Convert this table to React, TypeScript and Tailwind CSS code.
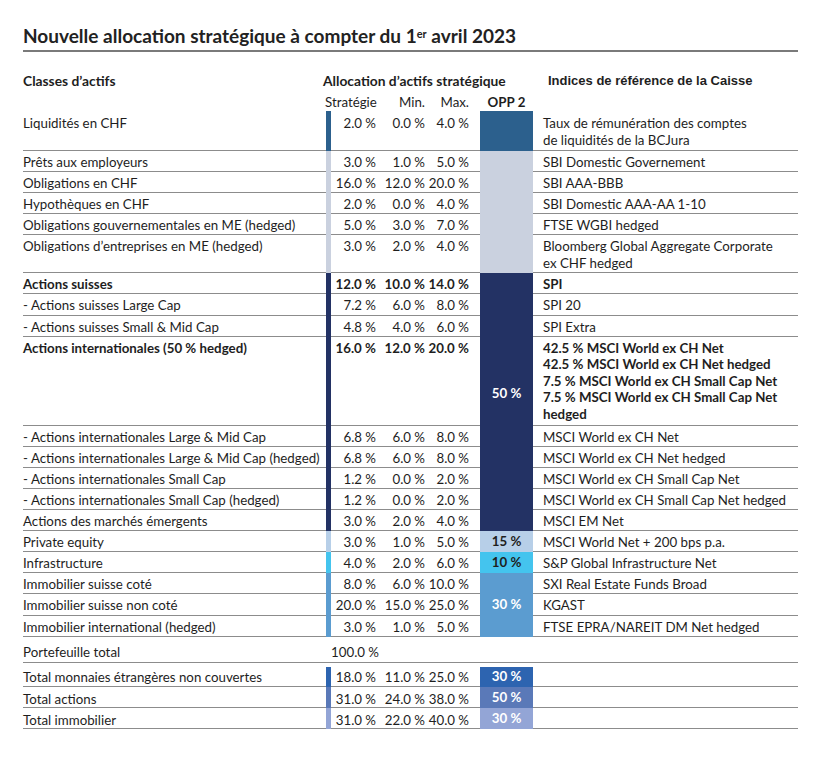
const line = "border-b border-[#8c8c8c]";

interface Row {
  label: string;
  s?: string;
  mn?: string;
  mx?: string;
  idx?: string[];
  bold?: boolean;
  pt: string;
  full?: boolean;
}

// narrow no-break space between number and %
const p = (n: string) => n + "\u202F%";

const rows: Row[] = [
  { label: "Liquidités en CHF", s: p("2.0"), mn: p("0.0"), mx: p("4.0"), idx: ["Taux de rémunération des comptes", "de liquidités de la BCJura"], pt: "pt-[4px]" },
  { label: "Prêts aux employeurs", s: p("3.0"), mn: p("1.0"), mx: p("5.0"), idx: ["SBI Domestic Governement"], pt: "pt-[3px]" },
  { label: "Obligations en CHF", s: p("16.0"), mn: p("12.0"), mx: p("20.0"), idx: ["SBI AAA-BBB"], pt: "pt-[3px]" },
  { label: "Hypothèques en CHF", s: p("2.0"), mn: p("0.0"), mx: p("4.0"), idx: ["SBI Domestic AAA-AA 1-10"], pt: "pt-[3px]" },
  { label: "Obligations gouvernementales en ME (hedged)", s: p("5.0"), mn: p("3.0"), mx: p("7.0"), idx: ["FTSE WGBI hedged"], pt: "pt-[3px]" },
  { label: "Obligations d’entreprises en ME (hedged)", s: p("3.0"), mn: p("2.0"), mx: p("4.0"), idx: ["Bloomberg Global Aggregate Corporate", "ex CHF hedged"], pt: "pt-[3px]" },
  { label: "Actions suisses", s: p("12.0"), mn: p("10.0"), mx: p("14.0"), idx: ["SPI"], bold: true, pt: "pt-[3px]" },
  { label: "- Actions suisses Large Cap", s: p("7.2"), mn: p("6.0"), mx: p("8.0"), idx: ["SPI 20"], pt: "pt-[3px]" },
  { label: "- Actions suisses Small & Mid Cap", s: p("4.8"), mn: p("4.0"), mx: p("6.0"), idx: ["SPI Extra"], pt: "pt-[3px]" },
  {
    label: "Actions internationales (50 % hedged)",
    s: p("16.0"),
    mn: p("12.0"),
    mx: p("20.0"),
    idx: [
      "42.5 % MSCI World ex CH Net",
      "42.5 % MSCI World ex CH Net hedged",
      "7.5 % MSCI World ex CH Small Cap Net",
      "7.5 % MSCI World ex CH Small Cap Net",
      "hedged",
    ],
    bold: true,
    pt: "pt-[3px]",
  },
  { label: "- Actions internationales Large & Mid Cap", s: p("6.8"), mn: p("6.0"), mx: p("8.0"), idx: ["MSCI World ex CH Net"], pt: "pt-[3px]" },
  { label: "- Actions internationales Large & Mid Cap (hedged)", s: p("6.8"), mn: p("6.0"), mx: p("8.0"), idx: ["MSCI World ex CH Net hedged"], pt: "pt-[3px]" },
  { label: "- Actions internationales Small Cap", s: p("1.2"), mn: p("0.0"), mx: p("2.0"), idx: ["MSCI World ex CH Small Cap Net"], pt: "pt-[3px]" },
  { label: "- Actions internationales Small Cap (hedged)", s: p("1.2"), mn: p("0.0"), mx: p("2.0"), idx: ["MSCI World ex CH Small Cap Net hedged"], pt: "pt-[3px]" },
  { label: "Actions des marchés émergents", s: p("3.0"), mn: p("2.0"), mx: p("4.0"), idx: ["MSCI EM Net"], pt: "pt-[3px]" },
  { label: "Private equity", s: p("3.0"), mn: p("1.0"), mx: p("5.0"), idx: ["MSCI World Net + 200 bps p.a."], pt: "pt-[3px]" },
  { label: "Infrastructure", s: p("4.0"), mn: p("2.0"), mx: p("6.0"), idx: ["S&P Global Infrastructure Net"], pt: "pt-[3px]" },
  { label: "Immobilier suisse coté", s: p("8.0"), mn: p("6.0"), mx: p("10.0"), idx: ["SXI Real Estate Funds Broad"], pt: "pt-[3px]" },
  { label: "Immobilier suisse non coté", s: p("20.0"), mn: p("15.0"), mx: p("25.0"), idx: ["KGAST"], pt: "pt-[3px]" },
  { label: "Immobilier international (hedged)", s: p("3.0"), mn: p("1.0"), mx: p("5.0"), idx: ["FTSE EPRA/NAREIT DM Net hedged"], pt: "pt-[3px]" },
  { label: "Portefeuille total", s: p("100.0"), pt: "pt-[7px]", full: true },
  { label: "Total monnaies étrangères non couvertes", s: p("18.0"), mn: p("11.0"), mx: p("25.0"), pt: "pt-[6px]" },
  { label: "Total actions", s: p("31.0"), mn: p("24.0"), mx: p("38.0"), pt: "pt-[4px]" },
  { label: "Total immobilier", s: p("31.0"), mn: p("22.0"), mx: p("40.0"), pt: "pt-[4px]" },
];

const blocks = [
  { key: "liq", row: "row-[1/span_1]", color: "bg-[#2c608d]" },
  { key: "obl", row: "row-[2/span_5]", color: "bg-[#cad1df]" },
  { key: "act", row: "row-[7/span_9]", color: "bg-[#233264]", text: p("50"), tc: "text-white", tpos: "pt-[112px]" },
  { key: "pe", row: "row-[16/span_1]", color: "bg-[#b7cfe8]", text: p("15"), tc: "text-[#1e1e1e]" },
  { key: "inf", row: "row-[17/span_1]", color: "bg-[#44c4ee]", text: p("10"), tc: "text-[#1e1e1e]" },
  { key: "imm", row: "row-[18/span_3]", color: "bg-[#5b9cd0]", text: p("30"), tc: "text-white" },
  { key: "tm", row: "row-[22/span_1]", color: "bg-[#2d64b0]", text: p("30"), tc: "text-white", gap: true },
  { key: "ta", row: "row-[23/span_1]", color: "bg-[#5a79b8]", text: p("50"), tc: "text-white" },
  { key: "ti", row: "row-[24/span_1]", color: "bg-[#93a5d6]", text: p("30"), tc: "text-white" },
];

export default function App() {
  return (
    <div className="min-h-[761px] w-[836px] bg-white pl-[23px] pt-[25px] font-['Lato',sans-serif] text-[13.3px] text-[#1e1e1e]">
      <div className="w-[775px] border-b-2 border-[#7a7a7a] pb-[3px]">
        <h1 className="text-[19px] font-bold leading-[22px] text-[#222]">
          Nouvelle allocation stratégique à compter du 1<sup className="text-[11px]">er</sup> avril 2023
        </h1>
      </div>

      <div className="mt-[20px] flex w-[775px] items-end leading-[17px]">
        <div className="w-[300px] text-[13.8px] font-bold">Classes d’actifs</div>
        <div className="w-[225px] text-[13.8px] font-bold">Allocation d’actifs stratégique</div>
        <div className="font-['Liberation_Sans',sans-serif] text-[13px] font-bold">Indices de référence de la Caisse</div>
      </div>

      <div className="mt-[5px] grid w-[775px] grid-cols-[303px_5px_45px_49px_44px_11px_53px_10px_255px] leading-[17px]">
        <div className="col-span-2" />
        <div className="-ml-[6px] text-right">Stratégie</div>
        <div className="text-right">Min.</div>
        <div className="text-right">Max.</div>
        <div />
        <div className="text-center font-bold">OPP 2</div>
      </div>

      <div className="grid w-[775px] grid-cols-[303px_5px_45px_49px_44px_11px_53px_10px_255px] grid-rows-[40px_21.1px_21.1px_21.1px_21.1px_38px_21.1px_21.1px_21.1px_89px_21.1px_21.1px_21.1px_21.1px_21.1px_21.1px_21.1px_21.1px_21.1px_21.1px_26px_24px_21.3px_21px] leading-[17px]">
        {blocks.map((b) => (
          <div key={b.key + "-bar"} className={`col-start-2 ${b.row} flex flex-col`}>
            <div className={`flex-1 ${b.color} ${b.gap ? "mt-[4px]" : ""}`} />
          </div>
        ))}
        {blocks.map((b) => (
          <div key={b.key + "-opp"} className={`col-start-7 ${b.row} flex flex-col`}>
            <div
              className={`flex flex-1 justify-center ${b.tpos ? b.tpos : "items-center"} ${b.color} ${b.gap ? "mt-[4px]" : ""}`}
            >
              {b.text && <span className={`whitespace-nowrap font-bold ${b.tc}`}>{b.text}</span>}
            </div>
          </div>
        ))}

        {rows.map((r, i) => {
          const txt = `${line} ${r.pt} ${r.bold ? "font-bold" : ""}`;
          return [
            <div key={i + "l"} className={`${txt} whitespace-nowrap`}>{r.label}</div>,
            r.full ? <div key={i + "b"} className={line} /> : null,
            <div key={i + "s"} className={`${txt} whitespace-nowrap text-right`}>{r.s}</div>,
            <div key={i + "mn"} className={`${txt} whitespace-nowrap text-right`}>{r.mn}</div>,
            <div key={i + "mx"} className={`${txt} whitespace-nowrap text-right`}>{r.mx}</div>,
            <div key={i + "g1"} className={line} />,
            r.full ? <div key={i + "o"} className={line} /> : null,
            <div key={i + "g2"} className={line} />,
            <div key={i + "i"} className={`${txt} ${r.idx && r.idx.length > 2 ? "leading-[16.5px]" : ""}`}>
              {r.idx?.map((t, j) => (
                <div key={j} className="whitespace-nowrap">{t}</div>
              ))}
            </div>,
          ];
        })}
      </div>
    </div>
  );
}
